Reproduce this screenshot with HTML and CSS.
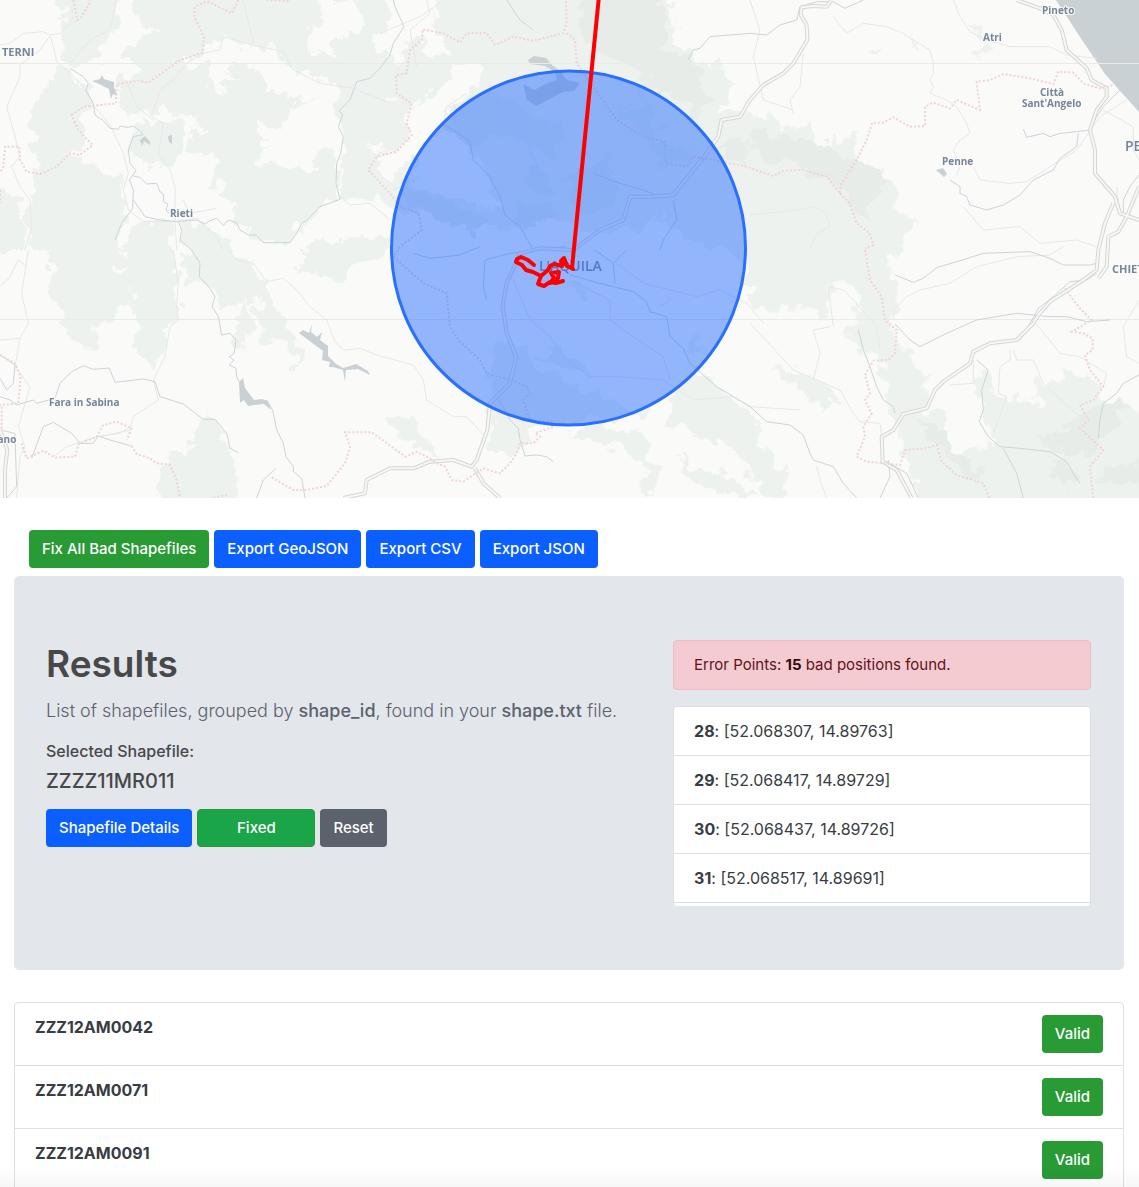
FILE: index.html
```html
<!DOCTYPE html>
<html lang="en">
<head>
<meta charset="utf-8">
<meta name="viewport" content="width=device-width, initial-scale=1">
<title>Shapefile Results</title>
<link rel="stylesheet" href="styles.css">
</head>
<body>
<section class="map" aria-label="Map">
<svg class="map-canvas" viewBox="0 0 1139 498" preserveAspectRatio="xMidYMid slice" role="img" aria-label="Map of shapefile points around L'Aquila">
  <defs>
    <filter id="rough" x="0" y="0" width="1139" height="498" filterUnits="userSpaceOnUse">
      <feTurbulence type="fractalNoise" baseFrequency=".06" numOctaves="4" seed="7"/>
      <feDisplacementMap in="SourceGraphic" scale="26" xChannelSelector="R" yChannelSelector="G"/>
    </filter>
    <path id="motorways" d="M2495 0L2480 20L2440 18L2405 22L2402 45L2420 75L2422 120L2380 190L2350 220L2290 255L2250 300L2220 350L2165 360L2155 410L2120 460L2020 585L1950 590L1890 590L1870 660L1800 690L1720 750L1620 745L1560 760L1520 850L1508 915L1520 1000L1548 1070L1530 1150L1470 1210L1462 1290L1430 1380L1415 1400L1360 1380L1290 1385L1240 1405L1170 1405L1140 1420L1100 1440L1095 1480L1030 1494M1425 1405L1450 1450L1500 1494M3050 0L3120 25L3160 45L3185 90L3200 150L3260 205L3275 240L3320 265L3320 290L3290 330L3270 390L3285 450L3285 520L3345 590L3360 640L3417 660M3417 560L3380 650L3355 695L3325 710L3320 800L3295 835M3340 610L3315 670L3295 750L3290 810L3250 840L3150 905L3115 945L3100 970L3050 1020L2970 1030L2920 1055L2910 1090L2830 1145L2805 1170L2780 1225L2710 1242L2680 1290L2645 1310L2648 1385L2690 1410L2735 1494M0 1290L22 1350L15 1410V1494"/>
  </defs>

  <!-- woodland -->
  <g filter="url(#rough)">
  <g transform="scale(.33333)">
    <path class="wood" d="M160 -40L350 -40L360 60L340 100L380 130L300 160L290 195L210 190L170 120L200 60ZM410 -40H1170V90L1120 130L1170 180V420L1110 430L1030 420L1010 330L1030 260L880 215L840 160L760 140L670 110L610 160L530 190L440 215L380 170L400 130L470 90L400 60ZM190 200L260 260L290 340L230 330L260 400L240 450L200 470L240 480L330 520L370 510L360 560L380 630L350 750H100L80 640L110 560L80 520L130 500L90 440L110 400L80 380L100 330L150 240ZM-40 530L60 600L80 680L60 750H-40ZM400 680L520 670L525 800H340ZM540 680L600 670L660 700L700 770L650 800L570 750L545 720ZM420 370L490 365L520 345L565 400L540 480L510 500L440 500L395 480L385 420ZM350 240L520 190L720 190L860 290L950 300L870 330L850 390L770 360L800 430L760 480L880 510L980 430L1010 460L1015 590L920 660L880 725H780L700 660L720 620L660 580L690 540L600 560L620 480L560 460L610 380L560 340L480 340L400 340L350 300ZM900 740L1020 710L1170 720V750L1080 790L1000 840L900 810ZM1030 420L1100 430L1170 460V560L1100 600L1025 590Z"/>
    <path class="clear" d="M330 100L400 60L430 70L390 150L310 180L290 150ZM950 0L1060 0L1090 80L1040 90L1060 140L980 80ZM920 80L960 50L1020 90L990 170L940 150ZM620 190L680 180L720 230L660 250L680 290L640 270ZM560 500L640 470L650 520L620 570L580 600L600 540ZM860 390L860 310L950 310L990 350L1010 420L960 450L960 490L910 510L870 450L820 460L780 420L780 370Z"/>
  </g>
  <g transform="translate(0 250) scale(.33333)">
    <path class="wood" d="M150 -10L370 -10L350 60L390 110L400 170L360 160L340 210L290 220L300 290L250 290L200 250L180 170L150 150ZM380 -10H520L530 100L535 210L500 220L490 310L460 360L430 320L400 290L420 210L390 180L410 120L340 90L380 60ZM560 -10L700 0L760 50L800 90L830 170L880 240L910 300L890 360L870 290L800 270L760 170L790 140L720 160L700 290L740 300L760 230L740 160L670 180L620 90L560 100L540 60ZM480 650L510 600L560 620L610 510L660 520L690 600L715 680V790H480ZM560 540L600 520L640 600L570 580Z"/>
  </g>
  <g transform="translate(380 0) scale(.33333)">
    <path class="wood" d="M180 -40H850L880 60L880 130L950 180L1010 190L1060 250L1020 330L1145 360V780L1080 800L1020 740L900 700L850 640L760 690L600 690L500 640L380 690L250 680L140 640L30 630L0 600L-35 560V460L60 470L0 440V290L80 310L30 280L-35 290V220L60 190L100 100L160 60Z"/>
    <path class="clear" d="M80 90L140 60L190 100L210 170L160 190L120 130ZM230 190L300 180L310 230L260 290L200 330L190 390L100 470L30 530L0 500V470L80 430L95 310L150 290L200 240ZM120 440L200 390L280 440L330 540L360 640L250 600L100 560Z"/>
    <path class="wood dark" d="M620 -40H830L870 80L850 160L980 210L960 260L1010 310L960 350L870 270L760 300L800 220L690 180L600 130ZM1000 440L1140 400V490L1040 480ZM700 330L790 310L860 420L940 460L850 510L820 430ZM570 520L700 470L700 620L580 630ZM440 490L480 500L520 570L480 590L430 550ZM60 560L170 590L290 640L340 680L260 690L80 610ZM410 610L540 620L500 680L410 660ZM230 310L370 280L450 350L560 390L510 470L420 420L340 410L280 450L200 390Z"/>
  </g>
  <g transform="translate(380 250) scale(.33333)">
    <path class="wood" d="M340 290L420 280L470 350L560 400L680 440L750 480L830 460L800 490L560 520L440 540L450 590L380 630L330 590L330 430ZM20 510L100 490L130 560L180 610L130 610L60 560ZM870 430L960 370L1010 420L1140 500V640L1060 600L920 540L870 520ZM560 540L640 530L760 540L800 570L830 660L820 740L790 720L800 630L690 580L620 570ZM880 610L960 660L1060 680L1140 740H980ZM550 90L600 100L640 140L620 170ZM480 300L600 310L620 380L520 350ZM840 150L890 160L850 170ZM930 280L960 250L970 310Z"/>
  </g>
  <g transform="translate(750 0) scale(.33333)">
    <path class="wood" d="M-5 335L60 355L100 390L170 360L190 430L240 440L250 400L330 410L310 480L380 495L430 560L440 630L485 650L460 760H-5ZM670 70L690 80L690 110L735 160L720 175L690 150L700 120L665 95ZM345 160L395 145L380 170ZM480 110L510 150L480 150Z"/>
    <path class="wood dark" d="M0 390L90 400L150 430L230 430L280 480L380 495L420 550L380 560L360 620L370 670L320 650L290 590L250 545L150 500L60 480L0 450Z"/>
  </g>
  <g transform="translate(750 250) scale(.33333)">
    <path class="wood" d="M-5 -5H450L410 30L440 110L430 210L440 270L480 310L500 370L530 380L530 490L580 495L590 590L630 630L650 590L720 600L690 500L700 430L680 370L720 360L730 430L830 440L860 390L930 400L940 355L1010 370L1060 410L1050 450L1120 460L1220 510V790H530L460 600L440 540L420 490L400 330L370 320L330 290L280 260L320 230V110L240 100L240 205L140 160L20 180L-5 150ZM60 345L140 360L210 395L260 460L220 480L160 420L110 390ZM0 580L60 600L120 690L90 744L0 690Z"/>
    <path class="clear" d="M240 100L320 110L325 220L280 250L240 210ZM590 400L690 420L700 500L690 540L640 620L600 590L580 500L560 470ZM740 430L830 440L890 460L880 485L840 460Z"/>
    <path class="wood dark" d="M495 510L580 530L600 590L660 640L710 650L690 690L590 640L560 580ZM950 510L1100 450L1125 470L1040 600L920 610L860 560L980 540ZM900 620L1000 670L960 710L920 670ZM1030 690L1080 650L1200 640V690L1060 710Z"/>
  </g>
  </g>

  <!-- sea and lakes -->
  <path class="water" d="M1056 0H1139V112L1105 74L1082 40Z"/>
  <path class="water" d="M92 81L100 79L102 75L104 79L114 82L114 87L117 96L113 94L111 99L109 89L99 84ZM140 140L145 136L150 142L150 145L144 141L142 146ZM168 136L172 135L172 144L169 142ZM936 170L943 168L947 174L944 177Z"/>
  <path class="water" d="M528 60L534 56L546 58L552 65L559 70L567 80L580 83L574 91L563 92L548 100L536 106L527 100L523 84L534 90L546 84L557 80L555 72L545 66L530 64Z"/>
  <path class="water" d="M299 333L303 330L309 333L312 324L311 332L317 337L322 332L320 340L328 346L328 356L336 364L343 368L350 366L356 364L368 371L370 375L358 369L346 370L345 382L343 370L333 367L329 367L330 362L322 360L323 351L315 345ZM239 382L243 378L245 388L254 400L262 399L268 401L271 410L264 404L254 405L248 406L244 400L240 403Z"/>

  <!-- tile seams -->
  <path class="seam" d="M0 63.500H1139M0 319.500H1139"/>

  <!-- minor roads -->
  <g class="road" transform="scale(.33333)">
    <path d="M0 135L30 130L70 100L130 95L150 105L160 140L170 185L200 210L250 260L275 310L330 375L370 460L385 520L370 570L385 630L430 665L520 665M150 105L180 100L220 60L215 20M150 108L120 150L60 195L60 230L20 320L40 390L60 470L35 500L60 560L90 600L95 680L75 750M1170 310L1060 265L960 250L880 210L850 155L760 135L670 110L660 150L610 160L560 190L520 240L480 270L455 350L490 370L475 460L510 510L525 560V660L530 750M730 0L760 130M350 0L330 90L270 120L210 190M520 665L590 655L650 710L670 750M550 600L570 640L650 625M1020 590L1050 615L1110 610L1170 660M380 240L410 320L460 360M0 190H80"/>
    <path d="M520 750L535 850L530 920L535 960L510 980L495 1070L460 1140L475 1200L400 1250L390 1290L300 1310M0 1020L60 1015L85 970L65 880L85 750M60 1015L45 1100L90 1160L55 1280L75 1340L60 1370L50 1494M0 860L30 830L55 780L80 800M685 750L710 780L760 790L800 845L850 835L890 870L930 920L980 960L1005 1025L1030 1050L1080 1045L1130 1065L1240 1095L1270 1140L1280 1200L1360 1250L1400 1250L1450 1305M160 1370L200 1340L290 1310L360 1300L390 1280"/>
    <path d="M1140 100L1260 50L1320 10M1280 0L1290 40L1230 90L1250 200M1330 380L1340 320L1400 280M1480 290L1570 400L1590 450L1620 510M1370 370L1330 330M1540 840L1590 960L1650 1010L1700 1080L1770 1130L1850 1130L1990 1140L2080 1200L2200 1190L2250 1220L2400 1230M1710 840L1830 900L1830 960L1900 1010L1990 1070L2010 1140M1850 790L1930 850L2090 890L2160 870L2240 910L2290 970M2250 645L2390 630L2440 620L2480 640L2490 680L2450 700L2430 750M2250 970L2380 1110L2520 1170L2560 1240L2580 1265L2640 1270L2645 1310M2440 1140L2460 1060L2440 990L2490 980M2250 0L2280 90L2260 170L2290 300L2380 330M2500 50L2540 100L2590 70L2660 80L2710 100L2740 120L2790 150L2800 190L2800 220L2790 240L2800 260L2790 280L2840 300L2870 320L2900 370L2910 400L2880 420L2860 450L2880 500L2870 525M2860 0L2880 50L2910 95L2960 120L3030 140L3150 140L3200 165L3290 175M2890 620L2950 690L3060 680L3120 730L3230 720L3290 740M2920 500L2940 540L3030 550L3080 545L3150 500L3230 450L3300 350L3380 300M2380 340L2370 300L2400 260L2410 160M2680 960V930L2720 890L2760 870L2850 850L2930 800L3050 770L3150 765L3190 740M2500 980L2485 860L2530 870L2560 900L2630 980L2640 1050M3100 960L3180 1060L3240 1070L3320 1120L3310 1160M2920 1080L2920 1150L2850 1155M3030 1050V1080L3000 1100L2995 1180L3020 1190L2980 1300M3040 1050L3050 1080L3100 1080L3130 1150L3250 1260M3417 900L3370 980L3380 1070L3417 1090M2480 1494L2460 1440L2450 1400M3360 640L3350 560M3310 330L3400 380V450L3417 480"/>
  </g>

  <!-- rivers -->
  <g class="river" transform="scale(.33333)">
    <path d="M210 205L250 230L265 250L258 270L280 310L285 345L310 362L330 385L355 388L360 378L385 382L400 378L420 392L430 404L400 410L385 450L390 490L408 512L388 540L400 570L398 625L365 670L345 720M400 528L420 532L440 552L470 550L480 575L490 582L490 605L504 612L498 630L508 640M400 600L435 650L480 660L530 665L590 660L615 672L630 662L650 655L670 676L685 660L710 668L720 690L745 705L768 705L790 728H870L890 700L905 670L920 662L960 620L1020 598L1008 550L1010 490L1022 460L1030 410L1015 380L1028 345L1018 332L1050 300L1070 245L1110 235L1140 205L1170 165L1180 130L1212 80L1185 20L1180 0M535 665L545 690L540 720L575 750L600 790L598 830L630 865L645 890L636 920L655 950L665 1005L690 1000L708 1020L702 1060L688 1070L702 1080L688 1095L708 1105L710 1130L735 1180M800 1200L818 1230L830 1290L850 1330L858 1370L880 1400V1415L905 1435L915 1494M0 1190L30 1200L50 1215L100 1200L110 1210L165 1195L180 1150L215 1115L250 1097L280 1108L328 1104L345 1147L430 1137L465 1145L480 1190L550 1212L610 1258L645 1258L680 1300L690 1345L715 1358M0 1065L45 1095L40 1150L20 1170L0 1135M95 1375L130 1280L160 1267L215 1300L240 1330L280 1330L295 1308L330 1320L395 1338M0 1290L45 1300L50 1460L20 1494M770 1494L790 1440L828 1405"/>
    <path d="M1330 375L1360 390L1410 425L1420 480L1470 530L1500 590L1515 645L1560 680L1600 750M1710 825L1800 850L1900 875L1940 905L1950 935L2000 950L2010 1010L2050 1045L2070 1090L2150 1160L2250 1220L2300 1265L2370 1275L2410 1305L2430 1360L2440 1380L2500 1400L2530 1450L2570 1494M1780 520L1860 550L1930 570L1980 590M2020 600L2030 660L1990 720L1980 750M1520 0L1560 60L1600 90M1490 1190L1515 1230L1530 1260L1555 1285L1560 1320L1575 1368L1610 1365L1640 1370L1660 1385M2065 180L2080 150L2100 145L2130 110L2250 100L2300 105L2340 75L2390 60L2400 20L2450 5H2490M2500 5L2535 25L2590 0M3360 270L3310 320L3290 350L3270 390L3230 395L3180 400L3150 410L3130 400L3080 412L3070 388M3235 400L3230 440L3180 475L3160 510L3100 540L3060 585L3010 615L2960 630L2910 615L2900 590L2880 580V560L2850 540M2685 972L2730 1020L2760 1040L2840 1000L2930 960L3050 940L3150 950L3200 950L3260 965L3330 960" class="hills"/>
    <path d="M2685 825L2740 847L2770 835L2810 803L2870 785L2950 760L3090 755L3120 765L3150 775L3190 795L3270 795L3290 790M3290 820L3260 840L3210 845L3160 890L3115 925L3090 970L3060 1020M2575 990L2590 1050L2610 1100L2630 1160L2650 1200L2680 1220L2685 1240M2665 1380L2670 1430L2640 1494M2930 1080L2965 1110L2945 1170L2950 1230L2938 1265L2965 1310L3000 1340L3060 1345L3150 1355L3200 1385L3220 1420L3240 1450M3010 1345L3050 1420L3070 1494M3417 1125L3370 1150L3350 1180L3310 1210L3300 1260L3295 1315M3417 525L3390 560L3370 600V640M2660 1385L2720 1420L2755 1494"/>
    <path d="M1460 900L1450 860L1455 780L1530 760L1600 750L1700 740M1785 750L1840 790L1880 750M1840 790L1845 850M1240 760L1290 775L1380 765L1440 740"/>
  </g>

  <!-- motorways -->
  <g class="motorway" transform="scale(.33333)">
    <use href="#motorways" class="casing"/>
    <use href="#motorways" class="core"/>
  </g>

  <!-- province borders -->
  <g class="border" transform="scale(.33333)">
    <path d="M220 0L232 60L245 50L268 10V0M800 0L870 3M715 0L695 40L620 3L585 20L583 50L612 110L608 158L540 180L445 248L415 242L350 252L348 310L300 315L250 320L215 345L235 390L278 435L240 465L210 460L170 500L120 522L80 515L60 480L58 440L15 440L10 500L0 520M0 570V610M0 1065L45 1090L62 1130L55 1210L0 1215M5 1220V1290M65 1330L80 1375L130 1352L165 1373L225 1370L235 1333L290 1310L310 1275L350 1265L395 1285L380 1320M395 1338L410 1362L450 1375L470 1390L510 1395L530 1440L540 1494M640 1494L680 1485M815 1432L880 1470L920 1470L980 1458L1035 1390L1050 1340L1035 1297H1115L1217 1370L1250 1355L1290 1375L1310 1390L1335 1400L1355 1440L1390 1445L1450 1405L1500 1420L1530 1390L1550 1360L1560 1330L1600 1330L1620 1310L1605 1300L1660 1280L1660 1265L1590 1260L1570 1200L1590 1180L1580 1160L1530 1140L1460 1120L1440 1080L1380 1025L1350 980L1340 880L1270 850L1180 770L1200 740L1265 690L1255 640L1200 620L1170 580L1105 510L1130 470L1190 455L1235 405L1220 370L1235 310L1190 280L1188 225L1220 220L1230 150L1265 120L1268 88L1330 100L1380 128L1400 100L1460 98L1485 135L1540 110L1600 122L1690 100L1700 70L1698 0M1700 100L1725 120L1730 190L1780 260L1850 360L1930 410L1995 425L1998 490L2060 500L2080 470L2140 480L2240 500L2320 528L2350 512L2410 510L2480 530L2520 580"/>
    <path d="M2520 580L2525 550L2570 480L2600 420L2617 368L2650 368L2680 352L2730 380L2775 378L2775 320L2800 308L2850 325L2870 300L2940 330L2930 245L2970 240L3010 222L3090 235L3160 252L3175 215L3220 218L3250 250L3300 265L3340 255M2520 580L2550 610L2570 670L2610 700L2620 735L2595 745M2595 750L2610 840L2645 890L2655 960L2690 990L2685 1060L2665 1080L2620 1082L2595 1125L2610 1180L2595 1200L2615 1240L2590 1280L2595 1310L2570 1370L2600 1385L2700 1395L2715 1350L2780 1345L2810 1335L2825 1385L2870 1425L2950 1450L2968 1494M3195 865L3220 900L3240 925L3275 960L3215 995L3250 1000L3278 1015L3278 1050L3255 1065L3270 1110L3310 1160L3280 1200L3240 1215L3265 1260L3240 1285L3310 1350L3270 1400L3280 1494"/>
  </g>

  <!-- place names -->
  <g class="place">
    <text x="2" y="56" class="city">TERNI</text>
    <text x="170" y="217">Rieti</text>
    <text x="49" y="406">Fara in Sabina</text>
    <text x="-9" y="443">nano</text>
    <text x="539" y="271" class="capital">L'AQUILA</text>
    <text x="1042" y="14">Pineto</text>
    <text x="983" y="41">Atri</text>
    <text x="1040" y="96">Città</text>
    <text x="1022" y="107">Sant'Angelo</text>
    <text x="942" y="165">Penne</text>
    <text x="1125" y="151" class="capital">PESCARA</text>
    <text x="1112" y="273" class="city">CHIETI</text>
  </g>

  <!-- search radius and shape track -->
  <circle class="radius" cx="568.500" cy="248" r="177"/>
  <g class="track">
    <path d="M599 -4L572 268"/>
    <path d="M534 265L528 260L521 257L517 259L516 262L522 265L526 270L533 272L541 276L548 270L550 266L554 264L562 266L561 261L564 258L567 266L573 269M541 276L538 284L544 286L550 282L556 283L563 281M550 283L554 278L551 273L559 272L558 278L556 281M563 259L564 264"/>
  </g>
</svg>
</section>

<main class="page">
  <div class="toolbar">
    <button type="button" class="btn btn-success">Fix All Bad Shapefiles</button>
    <button type="button" class="btn btn-primary">Export GeoJSON</button>
    <button type="button" class="btn btn-primary">Export CSV</button>
    <button type="button" class="btn btn-primary">Export JSON</button>
  </div>

  <section class="results">
    <div class="summary">
      <h1>Results</h1>
      <p class="lead">List of shapefiles, grouped by <strong>shape_id</strong>, found in your <strong>shape.txt</strong> file.</p>
      <h2 class="selected-label">Selected Shapefile:</h2>
      <p class="selected-name">ZZZZ11MR011</p>
      <div class="actions">
        <button type="button" class="btn btn-primary">Shapefile Details</button>
        <button type="button" class="btn btn-fixed">Fixed</button>
        <button type="button" class="btn btn-secondary">Reset</button>
      </div>
    </div>
    <div class="errors">
      <div class="alert" role="alert">Error Points: <strong>15</strong> bad positions found.</div>
      <ul class="list points">
        <li><strong>28</strong>: [52.068307, 14.89763]</li>
        <li><strong>29</strong>: [52.068417, 14.89729]</li>
        <li><strong>30</strong>: [52.068437, 14.89726]</li>
        <li><strong>31</strong>: [52.068517, 14.89691]</li>
        <li></li>
      </ul>
    </div>
  </section>

  <ul class="list shapes">
    <li><strong>ZZZ12AM0042</strong><button type="button" class="btn btn-success">Valid</button></li>
    <li><strong>ZZZ12AM0071</strong><button type="button" class="btn btn-success">Valid</button></li>
    <li><strong>ZZZ12AM0091</strong><button type="button" class="btn btn-success">Valid</button></li>
  </ul>
</main>
</body>
</html>
```
FILE: styles.css
```css
*, *::before, *::after { box-sizing: border-box; }

html { overflow-x: hidden; scrollbar-width: none; }

body {
  margin: 0;
  background: #fff;
  color: #373d43;
  font-family: Inter, Roboto, "Liberation Sans", sans-serif;
  font-size: 16px;
  line-height: 24px;
}

/* faint shade along the bottom edge of the window */
body::after {
  content: "";
  position: fixed;
  inset: auto 0 0;
  height: 20px;
  background: linear-gradient(rgba(0, 0, 0, 0), rgba(0, 0, 0, .03));
  pointer-events: none;
}

h1, h2, p, ul { margin: 0; padding: 0; }
ul { list-style: none; }

/* Map */
.map { height: 498px; background: #fafaf8; overflow: hidden; }
.map-canvas { display: block; width: 100%; height: 100%; }
.map-canvas path { vector-effect: non-scaling-stroke; }
.wood { fill: #eef2ef; }
.wood.dark { fill: #e7ece9; }
.clear { fill: #fafaf8; }
.water { fill: #cad1d5; }
.seam { stroke: #e9ebe9; }
.road path { fill: none; stroke: #e8e7e8; stroke-width: 1; stroke-linejoin: round; }
.river path { fill: none; stroke: #cbd4da; stroke-width: 1; stroke-linejoin: round; }
.motorway { fill: none; stroke-linejoin: round; }
.motorway .casing { stroke: #d6d6d6; stroke-width: 4; }
.motorway .core { stroke: #f7f7f5; stroke-width: 2; }
.border path { fill: none; stroke: #efd3d7; stroke-width: 2; stroke-dasharray: 2 2; }
.place {
  fill: #76869a;
  stroke: #fafaf8;
  stroke-width: 2px;
  paint-order: stroke;
  font: 700 10px "Open Sans", "Noto Sans", sans-serif;
}
.place .city { font-size: 11px; }
.place .capital { font-size: 14px; font-weight: 600; stroke: none; }
.radius { fill: #2970ff; fill-opacity: .5; stroke: #2970ff; stroke-width: 3; }
.track path {
  fill: none;
  stroke: #f00;
  stroke-width: 4;
  stroke-linecap: round;
  stroke-linejoin: round;
}

/* Page */
.page { padding: 32px 15px 0 14px; }
.toolbar { display: flex; flex-wrap: wrap; gap: 5px; padding: 0 15px 8px; }

.btn {
  height: 38px;
  padding: 0 12px;
  border: 1px solid transparent;
  border-radius: 4px;
  color: #fff;
  font: inherit;
  font-size: 15px;
  font-weight: 500;
  white-space: nowrap;
  cursor: pointer;
}
.btn-primary { background: #0b5fff; }
.btn-success { background: #289b35; }
.btn-fixed { min-width: 118px; background: #1aa549; border-color: #289b35; }
.btn-secondary { background: #5b626b; }

/* Results panel */
.results {
  display: grid;
  grid-template-columns: repeat(12, minmax(0, 1fr));
  column-gap: 30px;
  padding: 64px 33px 64px 32px;
  border-radius: 5px;
  background: #e3e6eb;
}
.summary { grid-column: span 7; }
.errors { grid-column: span 5; }
h1 { margin-bottom: 8px; color: #484848; font-size: 37px; font-weight: 600; line-height: 48px; }
.lead { margin-bottom: 16px; color: #5b626b; font-size: 18px; font-weight: 300; line-height: 30px; }
.lead strong { font-weight: 500; }
.selected-label { margin-bottom: 8px; color: #484848; font-size: 16px; font-weight: 500; line-height: 19px; }
.selected-name { margin-bottom: 16px; color: #484848; font-size: 20px; font-weight: 500; line-height: 24px; }
.actions { display: flex; flex-wrap: wrap; gap: 5px; }

.alert {
  margin-bottom: 16px;
  padding: 12px 20px;
  border: 1px solid #f3b9c0;
  border-radius: 4px;
  background: #f4cbd0;
  color: #5e1420;
  font-size: 15px;
}
.alert strong { color: #350c12; }

/* Lists */
.list { border: 1px solid #dedfe1; border-radius: 4px; background: #fff; }
.list li { padding: 12px 20px; border-bottom: 1px solid #dedfe1; }
.points { height: 200px; border-bottom: 0; overflow: auto; scrollbar-width: none; }
.shapes { margin-top: 32px; }
.shapes li { display: flex; justify-content: space-between; align-items: flex-start; }
.shapes li:last-child { border-bottom: 0; }
```
